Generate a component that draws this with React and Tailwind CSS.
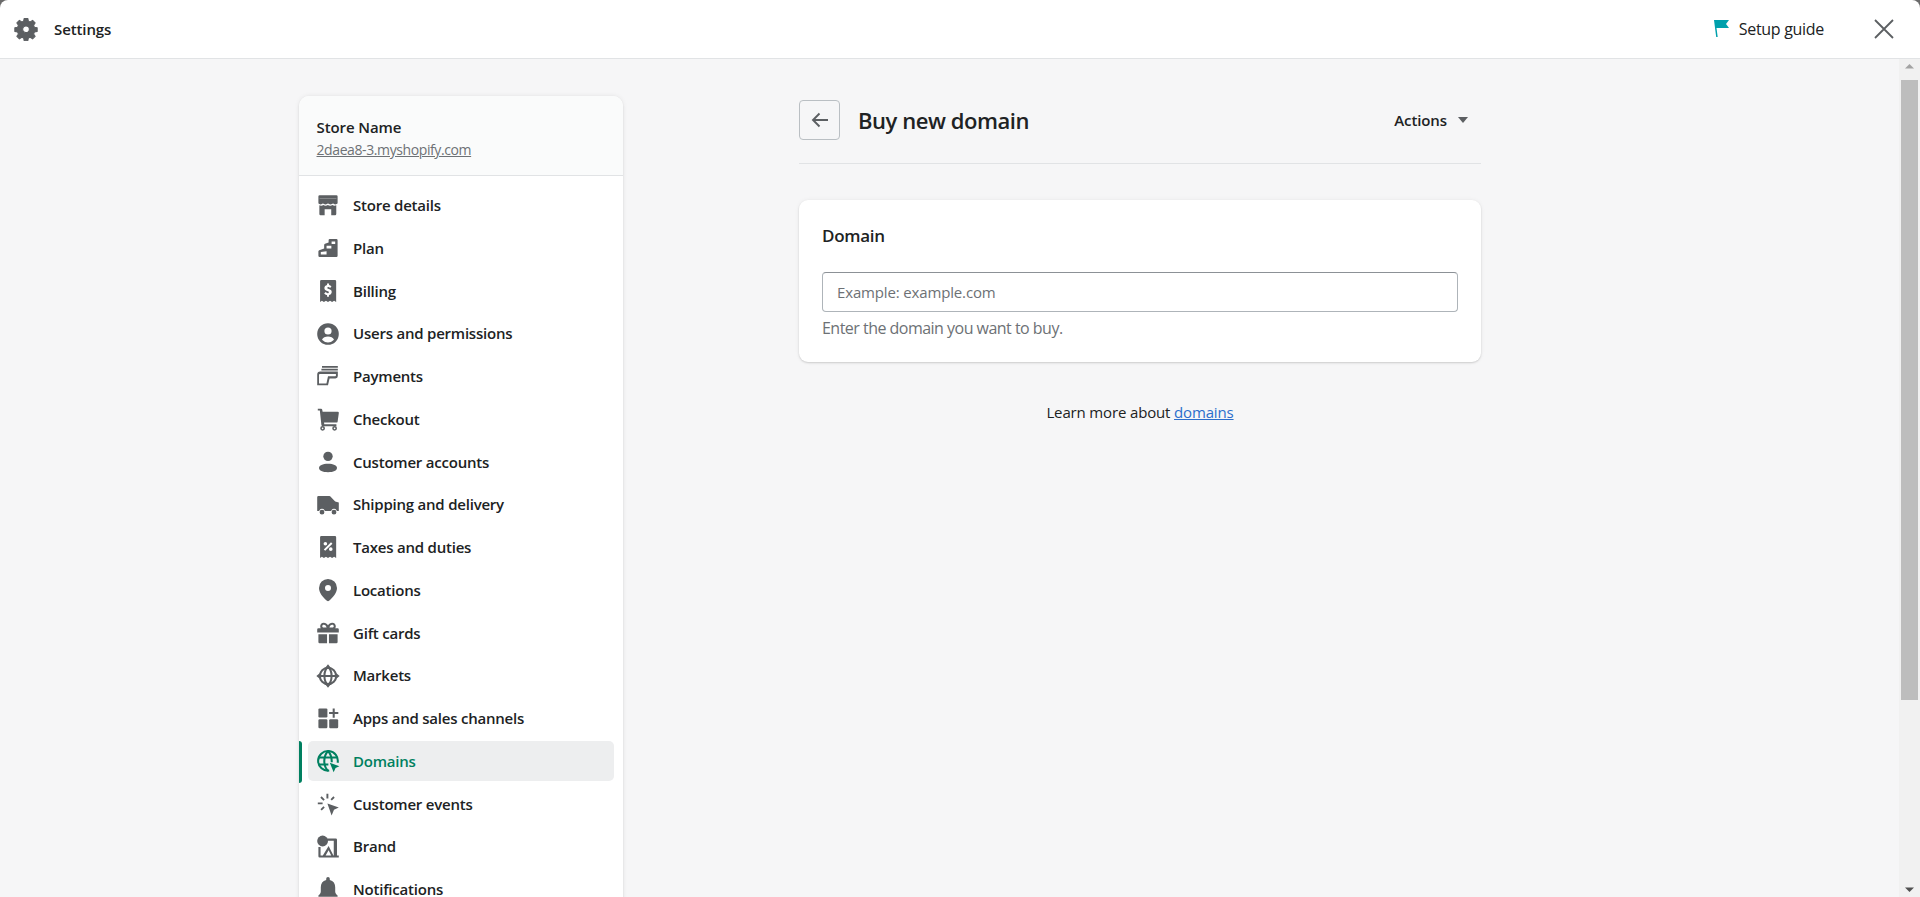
import React from "react";

const G = "#5c5f62";
const I = ({ children, c = G }) => (
  <svg viewBox="0 0 20 20" className="w-6 h-6 shrink-0" fill={c}>{children}</svg>
);

const icons = {
  store: <I><path fillRule="evenodd" d="M3 1.800h14a1 1 0 0 1 1 1v5.800c-.4.6-1.100 1-1.900 1-.8 0-1.500-.4-1.900-1-.4.6-1.200 1-2.100 1s-1.700-.4-2.100-1c-.4.6-1.200 1-2.100 1s-1.700-.4-2.100-1c-.4.6-1.100 1-1.900 1-.8 0-1.500-.4-1.900-1V2.800a1 1 0 0 1 1-1zM3 4.700v.4h14v-.4H3z" /><path fillRule="evenodd" d="M2.800 10.300c.5.200 1 .3 1.500.3.700 0 1.300-.2 1.800-.5.600.3 1.200.5 1.900.5s1.300-.2 1.900-.5c.6.3 1.200.5 1.900.5s1.300-.2 1.900-.5c.5.3 1.100.5 1.800.5.500 0 .900-.1 1.400-.3V17.500a1 1 0 0 1-1 1h-3.200v-5H7.200v5H3.800a1 1 0 0 1-1-1v-7.200z" /></I>,
  plan: <I><path fillRule="evenodd" d="M11.500 2.500H17a1 1 0 0 1 1 1V16.500a1 1 0 0 1-1 1H3a1 1 0 0 1-1-1v-3.800a1 1 0 0 1 .7-.9L6.800 10.500V7.300a1 1 0 0 1 .7-.9l3-1V3.500a1 1 0 0 1 1-1zm1.500 2v2.200h3V4.500h-3zM8.800 8.200v2.200h4V8.200h-4zM4 13.300v2.200h4.800v-2.800L4 13.300z" /></I>,
  billing: <I><path fillRule="evenodd" d="M4.200.9h11.600a1 1 0 0 1 1 1v17.300l-1.700-1-1.700 1-1.700-1-1.700 1-1.700-1-1.700 1-1.700-1-1.500 1V1.900a1 1 0 0 1 1-1zM9.200 3.700v1.200C7.900 5.200 7 6.200 7 7.500c0 1.500 1 2.100 2.300 2.500 1.100.3 1.400.6 1.400 1 0 .5-.4.800-1 .8-.6 0-1.200-.3-1.600-.9L6.800 12c.5.700 1.400 1.200 2.400 1.400V14.700h1.600v-1.300c1.400-.3 2.300-1.300 2.300-2.600 0-1.500-1-2.100-2.400-2.500-1-.3-1.300-.5-1.300-.9 0-.4.300-.7.900-.7s1 .2 1.400.7l1.200-1.100c-.5-.6-1.200-1-2-1.200V3.700H9.200z" /></I>,
  users: <I><path fillRule="evenodd" d="M10 1a9 9 0 1 1 0 18 9 9 0 0 1 0-18zm0 3.500a3 3 0 1 0 0 6 3 3 0 0 0 0-6zM10 12c-2.300 0-4.200 1-5 2.700A7 7 0 0 0 10 17a7 7 0 0 0 5-2.300c-.8-1.700-2.700-2.700-5-2.700z" /></I>,
  payments: <I><path d="M5 1.600h13.200v1.500H5zM4.500 4h13.700v1.500H4.500z" /><path fillRule="evenodd" d="M3.500 6.300H18.200V10a2 2 0 0 1-2 2H11.300L10 17.800H1V8.800a2.500 2.500 0 0 1 2.500-2.500zM3.200 8.400c-.4.100-.7.400-.7.800v7H8.700L10 10.200h6c.4 0 .6-.3.600-.6V8.400H3.200z" /></I>,
  checkout: <I><path d="M1.500 1.500h2.700a1 1 0 0 1 1 .8L5.500 4H18a1 1 0 0 1 1 1.200l-1 7a1 1 0 0 1-1 .8H6.700l.2 1.300H17V16H5.500a1 1 0 0 1-1-.9L3.200 3H1.500V1.500z" /><path fillRule="evenodd" d="M5.500 15.800a2 2 0 1 1 0 4 2 2 0 0 1 0-4zm0 1.300a.7.700 0 1 0 0 1.400.7.700 0 0 0 0-1.400zM15.500 15.800a2 2 0 1 1 0 4 2 2 0 0 1 0-4zm0 1.300a.7.700 0 1 0 0 1.400.7.700 0 0 0 0-1.400z" /></I>,
  customer: <I><circle cx="10" cy="5.300" r="3.900" /><path d="M10 11.500c4.500 0 7.500 1.500 7.500 3.500s-3 3.500-7.500 3.500S2.500 17 2.500 15s3-3.500 7.500-3.500z" /></I>,
  shipping: <I><path fillRule="evenodd" d="M2 2.500h9a1 1 0 0 1 .8.300L16 7l3 1v7h-1.600a2.500 2.500 0 0 0-4.800 0H7.400a2.500 2.500 0 0 0-4.800 0H1V3.500a1 1 0 0 1 1-1zM5 14a2 2 0 1 1 0 4 2 2 0 0 1 0-4zm10 0a2 2 0 1 1 0 4 2 2 0 0 1 0-4z" /></I>,
  taxes: <I><path fillRule="evenodd" d="M4.200.9h11.600a1 1 0 0 1 1 1v17.300l-1.700-1-1.700 1-1.700-1-1.700 1-1.700-1-1.700 1-1.700-1-1.500 1V1.900a1 1 0 0 1 1-1zM12.500 6 6.500 12l1.200 1.200 6-6L12.500 6zM7.800 5.800a1.500 1.500 0 1 0 0 3 1.500 1.500 0 0 0 0-3zM12.300 10.300a1.500 1.500 0 1 0 0 3 1.500 1.500 0 0 0 0-3z" /></I>,
  location: <I><path fillRule="evenodd" d="M10 .8a7.500 7.500 0 0 1 7.500 7.500c0 4-3.400 8-6.600 10.600a1.400 1.400 0 0 1-1.800 0C5.900 16.300 2.500 12.300 2.500 8.300A7.500 7.500 0 0 1 10 .8zm0 5a2.500 2.500 0 1 0 0 5 2.500 2.500 0 0 0 0-5z" /></I>,
  gift: <I><path fillRule="evenodd" d="M6.500 1.500c1.500 0 2.700.8 3.500 2 .8-1.200 2-2 3.500-2C15.400 1.500 16.500 3 16.500 4.300c0 .7-.2 1.300-.5 1.700H18a1 1 0 0 1 1 1v2.500H1V7a1 1 0 0 1 1-1h2c-.3-.4-.5-1-.5-1.700 0-1.300 1.100-2.800 3-2.800zm0 1.700c-.7 0-1.300.5-1.300 1.100 0 .7.600 1.200 1.300 1.200h2.300c-.2-1.300-1.100-2.300-2.300-2.300zm7 0c-1.200 0-2.100 1-2.300 2.300h2.300c.7 0 1.300-.5 1.300-1.200 0-.6-.6-1.100-1.300-1.100z" /><path d="M2 11h7.200v7.500H3a1 1 0 0 1-1-1V11zM10.800 11H18v6.500a1 1 0 0 1-1 1h-6.200V11z" /></I>,
  markets: <I><g fill="none" stroke="#5c5f62" strokeWidth="1.700"><circle cx="10" cy="10" r="6.800" /><ellipse cx="10" cy="10" rx="3" ry="6.800" /><path d="M3.200 10h13.600" /></g><path d="M10 .3l2.500 3h-5zM10 19.700l-2.500-3h5zM.3 10l3-2.500v5zM19.700 10l-3 2.500v-5z" /></I>,
  apps: <I><rect x="2" y="2" width="7.500" height="7.500" rx="1" /><rect x="2" y="11" width="7.500" height="7.500" rx="1" /><rect x="11" y="11" width="7.500" height="7.500" rx="1" /><path d="M13.900 2h1.700v3h3v1.700h-3v3h-1.700v-3h-3V5h3z" /></I>,
  domains: <I c="#008060"><g fill="none" stroke="#008060" strokeWidth="1.700"><path d="M18 11.500A8.200 8.200 0 1 0 11 18" /><path d="M10 1.800c-2 2-3.100 5-3.100 8.200s1.100 6.200 3.100 8.200M10 1.800c2 2 3.100 5 3.100 8.200v1" /><path d="M2.300 7h15.400M2.300 13h8" /></g><path d="M11.500 11.500l8 2.800-3.200 1.600-1.600 3.400z" /></I>,
  events: <I><path d="M9.500 9.500l9.500 3.400-4 1.900-2 4.700z" /><path d="M8.700 1.500h1.600v4H8.700zM1.500 8.700h4v1.600h-4z" /><path d="M3.600 4.700l1.100-1.100 2.600 2.600-1.100 1.100zM14.500 3.600l1.100 1.100-2.400 2.400-1.100-1.100zM3.700 14.400l2.500-2.500 1.100 1.100-2.500 2.500z" /></I>,
  brand: <I><circle cx="5.500" cy="5" r="4.500" /><path fillRule="evenodd" d="M9 3h7.500a1 1 0 0 1 1 1v13H19v1.700H3a1 1 0 0 1-1-1V10h1.800v7h1.900l4.800-7.800 4 7.800h.3V4.800H9V3zM8 17h4.700l-2.200-4.300L8 17z" /></I>,
  bell: <I><path d="M10 0a1.500 1.500 0 0 1 1.500 1.500v.9c3 .7 4.500 3.100 4.500 6.100v3.500c0 1.500 1 2.500 2 3.500v1H2v-1c1-1 2-2 2-3.500V8.500c0-3 1.500-5.400 4.500-6.100v-.9A1.500 1.500 0 0 1 10 0z" /></I>,
};

const nav = [
  ["Store details", "store"],
  ["Plan", "plan"],
  ["Billing", "billing"],
  ["Users and permissions", "users"],
  ["Payments", "payments"],
  ["Checkout", "checkout"],
  ["Customer accounts", "customer"],
  ["Shipping and delivery", "shipping"],
  ["Taxes and duties", "taxes"],
  ["Locations", "location"],
  ["Gift cards", "gift"],
  ["Markets", "markets"],
  ["Apps and sales channels", "apps"],
  ["Domains", "domains"],
  ["Customer events", "events"],
  ["Brand", "brand"],
  ["Notifications", "bell"],
];

function Row({ label, icon }) {
  const active = label === "Domains";
  return (
    <div className="relative h-[42.75px] flex items-center px-[9px]">
      {active && <div className="absolute left-0 top-[1px] bottom-0 w-[3px] bg-[#008060] rounded-r-sm" />}
      <div className={`flex-1 h-[40px] flex items-center pl-[8px] gap-[13px] rounded-[5px] ${active ? "bg-[#edeeef]" : ""}`}>
        {icons[icon]}
        <span className={`text-[15px] font-semibold tracking-[-0.22px] ${active ? "text-[#008060]" : "text-[#202223]"}`}>{label}</span>
      </div>
    </div>
  );
}

export default function App() {
  return (
    <div className="h-[897px] overflow-hidden flex flex-col bg-[#6a6a6a] font-['Open_Sans','Noto_Sans',sans-serif] text-[#202223] tracking-[-0.3px]">
      <header className="h-[59px] shrink-0 bg-white rounded-t-[8px] border-b border-[#e1e3e5] flex items-center pl-[14px] pr-[26px]">
        <svg viewBox="0 0 20 20" className="w-[24px] h-[24px]" fill={G} stroke={G} strokeWidth="0.9" strokeLinejoin="round">
          <path fillRule="evenodd" d="M8.500 1.200h3l.5 2.300 1.500.6 2-1.300 2.100 2.100-1.300 2 .7 1.600 2.300.5v3l-2.300.5-.7 1.600 1.300 2-2.100 2.100-2-1.300-1.500.6-.5 2.300h-3L8 17.500l-1.500-.6-2 1.300-2.100-2.100 1.300-2-.7-1.600-2.300-.5v-3l2.300-.5.7-1.600-1.300-2 2.100-2.100 2 1.300L8 3.500l.5-2.300zM10 7.400a2.800 2.800 0 1 0 0 5.600 2.800 2.800 0 0 0 0-5.600z" />
        </svg>
        <span className="ml-[16px] text-[15px] font-semibold tracking-[-0.1px]">Settings</span>
        <div className="ml-auto flex items-center">
          <svg viewBox="0 0 18 20" className="w-[18px] h-[20px]" fill="#00a0ac">
            <path d="M1 1h15l-3 4 3 4H3.500l1.200 9H3.200z" />
          </svg>
          <span className="ml-[8px] text-[16px] font-normal">Setup guide</span>
          <svg viewBox="0 0 20 20" className="ml-[50px] w-[20px] h-[20px]" stroke="#5c5f62" strokeWidth="1.800" fill="none">
            <path d="M1 1l18 18M19 1L1 19" />
          </svg>
        </div>
      </header>

      <div className="flex-1 min-h-0 flex">
        <main className="flex-1 min-w-0 overflow-hidden flex bg-[#f6f6f7] pt-[37px] pl-[299px]">
          <aside className="w-[324px] shrink-0 self-start bg-white rounded-t-[10px] shadow-[0_0_5px_rgba(23,24,24,0.08),0_1px_2px_rgba(0,0,0,0.1)]">
            <div className="h-[80px] bg-[#fafbfb] rounded-t-[10px] border-b border-[#e1e3e5] pl-[17.5px] pr-[18px] pt-[21px]">
              <div className="text-[15px] font-semibold tracking-[-0.1px] leading-[20px]">Store Name</div>
              <div className="text-[14px] tracking-[-0.4px] leading-[20px] mt-[3px] text-[#6d7175] underline">2daea8-3.myshopify.com</div>
            </div>
            <nav className="pt-[8px]">
              {nav.map(([l, i]) => <Row key={l} label={l} icon={i} />)}
            </nav>
          </aside>

          <section className="w-[682px] ml-[176px] shrink-0 -mt-[37px]">
            <div className="h-[105px] pt-[41px] border-b border-[#e1e3e5]">
              <div className="flex items-center h-[40px]">
                <button className="w-[41px] h-[40px] flex items-center justify-center border border-[#babfc3] rounded-[4px] bg-[#f6f6f7]">
                  <svg viewBox="0 0 20 20" className="w-[20px] h-[20px]" stroke="#5c5f62" strokeWidth="1.900" fill="none">
                    <path d="M18 10H3M9.500 3.500 3 10l6.500 6.500" />
                  </svg>
                </button>
                <h1 className="ml-[18px] text-[22px] font-semibold tracking-[-0.45px]">Buy new domain</h1>
                <div className="ml-auto mr-[13px] flex items-center">
                  <span className="text-[15px] font-semibold tracking-[-0.1px]">Actions</span>
                  <svg viewBox="0 0 10 6" className="ml-[11px] w-[10px] h-[6px]" fill="#5c5f62"><path d="M0 0h10L5 6z" /></svg>
                </div>
              </div>
            </div>

            <div className="mt-[36px] h-[162px] bg-white rounded-[9px] shadow-[0_0_5px_rgba(23,24,24,0.05),0_1px_2px_rgba(0,0,0,0.15)] px-[23px] pt-[24px]">
              <h2 className="text-[17px] font-semibold leading-[24px]">Domain</h2>
              <div className="mt-[24px] h-[40px] border border-[#aeb4b9] border-t-[#8c9196] rounded-[4px] flex items-center px-[14px] text-[15px] tracking-[-0.15px] text-[#6d7175]">Example: example.com</div>
              <p className="mt-[4px] text-[16px] leading-[24px] tracking-[-0.52px] text-[#6d7175]">Enter the domain you want to buy.</p>
            </div>

            <p className="mt-[40px] text-center text-[15px] leading-[20px] tracking-[-0.15px]">
              Learn more about <span className="text-[#2c6ecb] underline">domains</span>
            </p>
          </section>
        </main>

        <div className="w-[21px] shrink-0 bg-[#f1f1f1] flex flex-col items-center px-[2px]">
          <svg viewBox="0 0 17 17" className="w-[17px] h-[17px] shrink-0" fill="#a3a3a3"><path d="M8.500 5 13 9.500H4z" /></svg>
          <div className="w-[17px] h-[620px] mt-[4px] bg-[#bdbdbd] shrink-0" />
          <svg viewBox="0 0 17 17" className="mt-auto w-[17px] h-[17px] shrink-0" fill="#505050"><path d="M8.500 12 4 7.500h9z" /></svg>
        </div>
      </div>
    </div>
  );
}
